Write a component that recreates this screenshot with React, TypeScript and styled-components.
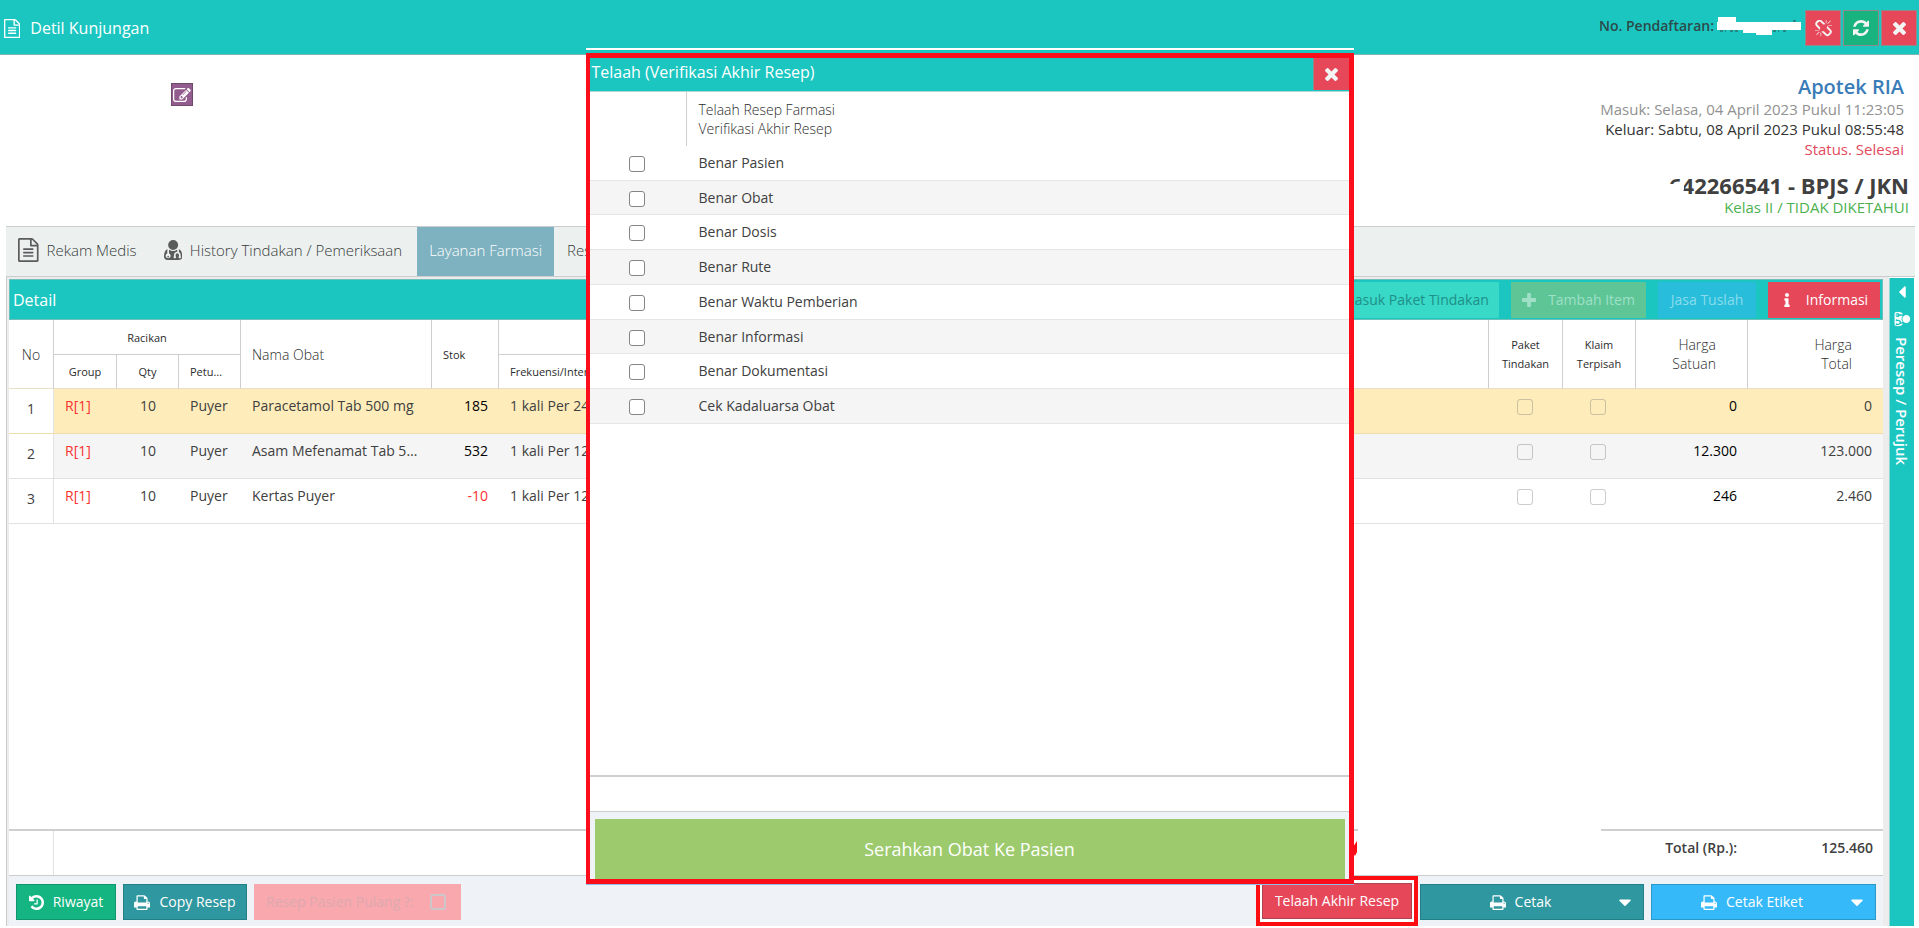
import React from "react";
import styled, { createGlobalStyle, css } from "styled-components";
import { FaInfo, FaCaretDown, FaCaretLeft } from "react-icons/fa";

const TEAL = "#1bc6c1";
const LINE = "#cfcfcf";

const Global = createGlobalStyle`
  * { box-sizing: border-box; }
  html, body, #root { height: 100%; }
  body { margin: 0; background: #fff; color: #404040; font: 14px/20px "Open Sans", sans-serif; overflow: hidden; }
  button { font-family: inherit; cursor: pointer; }
  table { border-collapse: separate; border-spacing: 0; table-layout: fixed; width: 100%; }
  th { font-weight: 300; color: #2c2c2c; }
`;

/* Font Awesome 4 glyphs: viewBox and outline */
const glyphs = {
  file: ["0 0 1536 1792", "M1468 380q28 28 48 76t20 88v1152q0 40-28 68t-68 28H96q-40 0-68-28t-28-68V96q0-40 28-68T96 0h896q40 0 88 20t76 48zm-444-244v376h376q-10-29-22-41l-313-313q-12-12-41-22zm384 1528V640H992q-40 0-68-28t-28-68V128H128v1536h1280zM384 800q0-14 9-23t23-9h704q14 0 23 9t9 23v64q0 14-9 23t-23 9H416q-14 0-23-9t-9-23v-64zm736 224q14 0 23 9t9 23v64q0 14-9 23t-23 9H416q-14 0-23-9t-9-23v-64q0-14 9-23t23-9h704zm0 256q14 0 23 9t9 23v64q0 14-9 23t-23 9H416q-14 0-23-9t-9-23v-64q0-14 9-23t23-9h704z"],
  edit: ["0 128 1792 1408", "M888 1184l116-116-152-152-116 116v56h96v96h56zm440-720q-16-16-33 1L945 815q-17 17-1 33t33-1l350-350q17-17 1-33zm80 594v190q0 119-84.500 203.500T1120 1536H288q-119 0-203.500-84.500T0 1248V416q0-119 84.500-203.500T288 128h832q63 0 117 25 15 7 18 23 3 17-9 29l-49 49q-14 14-32 8-23-6-45-6H288q-66 0-113 47t-47 113v832q0 66 47 113t113 47h832q66 0 113-47t47-113v-126q0-13 9-22l64-64q15-15 35-7t20 29zm-96-738l288 288-672 672H640V992zm444 132l-92 92-288-288 92-92q28-28 68-28t68 28l152 152q28 28 28 68t-28 68z"],
  refresh: ["0 128 1536 1536", "M1511 1056q0 5-1 7-64 268-268 434.500T764 1664q-146 0-282.500-55T238 1452l-129 129q-19 19-45 19t-45-19-19-45v-448q0-26 19-45t45-19h448q26 0 45 19t19 45-19 45l-137 137q71 66 161 102t187 36q134 0 250-65t186-179q11-17 53-117 8-23 30-23h192q13 0 22.500 9.500t9.500 22.500zm25-800v448q0 26-19 45t-45 19h-448q-26 0-45-19t-19-45 19-45l138-138Q969 384 768 384q-134 0-250 65T332 628q-11 17-53 117-8 23-30 23H50q-13 0-22.500-9.500T18 736v-7q65-268 270-434.500T768 128q146 0 284 55.500T1297 340l130-129q19-19 45-19t45 19 19 45z"],
  unlink: ["64 64 1664 1664", "M503 1271l-256 256q-10 9-23 9-12 0-23-9-9-10-9-23t9-23l256-256q10-9 23-9t23 9q9 10 9 23t-9 23zm169 41v320q0 14-9 23t-23 9-23-9-9-23v-320q0-14 9-23t23-9 23 9 9 23zm-224-224q0 14-9 23t-23 9h-320q-14 0-23-9t-9-23 9-23 23-9h320q14 0 23 9t9 23zm1264 128q0 120-85 203l-147 146q-83 83-203 83-121 0-204-85l-334-335q-21-21-42-56l239-18 273 274q28 28 68 28.500t68-27.500l147-146q28-28 28-67 0-40-28-68l-274-275 18-239q35 21 56 42l336 336q84 86 84 204zm-617-724l-239 18-273-274q-28-28-68-28-39 0-68 27l-147 146q-28 28-28 67 0 40 28 68l274 274-18 240q-35-21-56-42l-336-336q-84-86-84-204 0-120 85-203l147-146q83-83 203-83 121 0 204 85l334 335q21 21 42 56zm633 84q0 14-9 23t-23 9h-320q-14 0-23-9t-9-23 9-23 23-9h320q14 0 23 9t9 23zm-544-544v320q0 14-9 23t-23 9-23-9-9-23v-320q0-14 9-23t23-9 23 9 9 23zm407 151l-256 256q-11 9-23 9t-23-9q-9-10-9-23t9-23l256-256q10-9 23-9t23 9q9 10 9 23t-9 23z"],
  times: ["302 366 1188 1188", "M1490 1322q0 40-28 68l-136 136q-28 28-68 28t-68-28l-294-294-294 294q-28 28-68 28t-68-28l-136-136q-28-28-28-68t28-68l294-294-294-294q-28-28-28-68t28-68l136-136q28-28 68-28t68 28l294 294 294-294q28-28 68-28t68 28l136 136q28 28 28 68t-28 68l-294 294 294 294q28 28 28 68z"],
  plus: ["192 128 1408 1408", "M1600 736v192q0 40-28 68t-68 28h-416v416q0 40-28 68t-68 28h-192q-40 0-68-28t-28-68v-416h-416q-40 0-68-28t-28-68v-192q0-40 28-68t68-28h416v-416q0-40 28-68t68-28h192q40 0 68 28t28 68v416h416q40 0 68 28t28 68z"],
  print: ["64 0 1664 1664", "M448 1536h896v-256h-896v256zm0-640h896v-384h-160q-40 0-68-28t-28-68v-160h-640v640zm1152 64q0-26-19-45t-45-19-45 19-19 45 19 45 45 19 45-19 19-45zm128 0v416q0 13-9.500 22.500t-22.500 9.500h-224v160q0 40-28 68t-68 28h-960q-40 0-68-28t-28-68v-160h-224q-13 0-22.500-9.500t-9.500-22.500v-416q0-79 56.500-135.500t135.500-56.500h64v-544q0-40 28-68t68-28h672q40 0 88 20t76 48l152 152q28 28 48 76t20 88v256h64q79 0 135.500 56.500t56.500 135.500z"],
  history: ["128 128 1536 1536", "M1664 896q0 156-61 298t-164 245-245 164-298 61q-172 0-327-72.500t-264-204.500q-7-10-6.500-22.500t8.500-20.500l137-138q10-9 25-9 16 2 23 12 73 95 179 147t225 52q104 0 198.500-40.500t163.500-109.500 109.500-163.500 40.500-198.500-40.500-198.500-109.500-163.500-163.500-109.500-198.500-40.500q-98 0-188 35.500t-160 101.500l137 138q31 30 14 69-17 40-59 40h-448q-26 0-45-19t-19-45v-448q0-42 40-59 39-17 69 14l130 129q107-101 244.500-156.500t284.500-55.500q156 0 298 61t245 164 164 245 61 298zm-640-288v448q0 14-9 23t-23 9h-320q-14 0-23-9t-9-23v-64q0-14 9-23t23-9h224v-352q0-14 9-23t23-9h64q14 0 23 9t9 23z"],
  doctor: ["0 128 1408 1540", "M384 1408q0 26-19 45t-45 19-45-19-19-45 19-45 45-19 45 19 19 45zm1024 0q0 121-73 190t-194 69H267q-121 0-194-69T0 1408q0-68 5.500-131t24-138T77 1006.500t81-103T278 843q-22 52-22 120v203q-58 20-93 70t-35 111q0 80 56 136t136 56 136-56 56-136q0-61-35.500-111t-92.500-70V963q0-62 25-93 132 104 295 104t295-104q25 31 25 93v64q-106 0-181 75t-75 181v89q-32 29-32 71 0 40 28 68t68 28 68-28 28-68q0-42-32-71v-89q0-52 38-90t90-38 90 38 38 90v89q-32 29-32 71 0 40 28 68t68 28 68-28 28-68q0-42-32-71v-89q0-68-34.500-127.500T1152 1064q0-10 .5-42.500t0-48-2.500-41.500-7-47-13-40q68 15 120 60.500t81 103 47.500 132.500 24 138 5.500 131zM1088 512q0 159-112.500 271.500T704 896 432.500 783.500 320 512t112.500-271.500T704 128t271.500 112.500T1088 512z"],
};
const GlyphSvg = styled.svg<{ $s: number }>`
  height: ${(p) => p.$s}px;
  width: auto;
  fill: currentColor;
  flex: none;
  display: block;
`;
const Glyph = ({ name, s }: { name: keyof typeof glyphs; s: number }) => (
  <GlyphSvg $s={s} viewBox={glyphs[name][0]} aria-hidden="true">
    <path d={glyphs[name][1]} />
  </GlyphSvg>
);

const Page = styled.div`
  height: 100%;
  display: flex;
  flex-direction: column;
  padding-bottom: 2px;
  position: relative;
`;
const TopBar = styled.header`
  flex: none;
  height: 55px;
  background: ${TEAL};
  border-bottom: 1px solid #7fb5b3;
  display: flex;
  align-items: flex-start;
  padding: 10px 2px 0 4px;
  color: #fff;
`;
const Title = styled.h1`
  flex: 1;
  margin: 0;
  padding-top: 8px;
  display: flex;
  align-items: center;
  gap: 10px;
  font-size: 16px;
  line-height: 20px;
  font-weight: 400;
`;
const RegNo = styled.div`
  display: flex;
  align-items: center;
  gap: 3px;
  height: 32px;
  margin-right: 2px;
  font-size: 14px;
  font-weight: 600;
  color: #2b4a4a;
`;
const SquareButton = styled.button<{ $bg: string }>`
  width: 36px;
  height: 36px;
  padding: 0;
  margin-left: 2px;
  border: 1px solid #8f8a8c;
  background: ${(p) => p.$bg};
  color: #f4f4f4;
  display: flex;
  align-items: center;
  justify-content: center;
`;
const Summary = styled.section`
  flex: none;
  height: 171px;
  display: flex;
  justify-content: space-between;
  padding: 18px 10px 0 171px;
`;
const EditButton = styled.button`
  width: 22px;
  height: 23px;
  margin-top: 10px;
  padding: 0;
  border: 1px solid #6f4a6b;
  background: #935c8e;
  color: #fff;
  display: flex;
  align-items: center;
  justify-content: center;
`;
const Visit = styled.div`
  display: flex;
  flex-direction: column;
  align-items: flex-end;
`;
const VisitLine = styled.div<{ $c: string }>`
  color: ${(p) => p.$c};
  font-size: 15px;
  line-height: 20px;
  padding-right: 5px;
`;
const Clinic = styled.h2`
  margin: 0;
  padding: 2px 5px 0 0;
  font-size: 20px;
  line-height: 24px;
  font-weight: 600;
  color: #3a7cb8;
`;
const Insurance = styled.div`
  position: relative;
  margin-top: 14px;
  font-size: 22px;
  line-height: 24px;
  font-weight: 700;
`;
const Smudge = styled.svg`
  position: absolute;
  left: -8px;
  top: 0;
`;
const ClassLine = styled(VisitLine)`
  padding-right: 0;
`;
const Tabs = styled.nav`
  flex: none;
  height: 51px;
  margin: 0 4px 0 6px;
  border-top: 1px solid #c9cdcd;
  border-bottom: 1px solid #c9cdcd;
  background: #ecf1f0;
  display: flex;
  gap: 1px;
`;
const Tab = styled.button<{ $active?: boolean }>`
  border: 0;
  padding: 0 ${(p) => (p.$active ? 12 : 14)}px 4px 12px;
  display: flex;
  align-items: center;
  gap: 8px;
  white-space: nowrap;
  font-size: 15px;
  font-weight: 300;
  line-height: 20px;
  background: ${(p) => (p.$active ? "#7eb2c0" : "transparent")};
  color: ${(p) => (p.$active ? "#fff" : "#383a3a")};
  svg { color: #5a5c5c; }
`;
const Work = styled.main`
  flex: 1;
  min-height: 0;
  margin: 0 5px 0 6px;
  display: flex;
`;
const Panel = styled.section`
  flex: 1;
  min-width: 0;
  display: flex;
  flex-direction: column;
  padding: 2px 6px 0 2px;
  border-left: 1px solid #c9cdcd;
  background: #ececec;
`;
const Side = styled.aside`
  width: 25px;
  margin-top: 1px;
  border-left: 1px solid #8fd8d5;
  background: ${TEAL};
  color: #fff;
  display: flex;
  flex-direction: column;
  align-items: center;
  gap: 9px;
  padding-top: 4px;
`;
const SideLabel = styled.div`
  writing-mode: vertical-rl;
  display: flex;
  align-items: center;
  gap: 10px;
  font-size: 15px;
  line-height: 24px;
  font-weight: 600;
  svg { transform: rotate(90deg); }
`;
const DetailBar = styled.div`
  flex: none;
  height: 41px;
  border: 1px solid #6fbfba;
  background: ${TEAL};
  display: flex;
  align-items: center;
  justify-content: flex-end;
  gap: 12px;
  padding: 0 2px 0 3px;
`;
const DetailTitle = styled.h2`
  flex: 1;
  margin: 0;
  color: #fff;
  font-size: 16px;
  line-height: 20px;
  font-weight: 400;
`;
const BarButton = styled.button<{ $bg: string; $c: string; $w: number }>`
  width: ${(p) => p.$w}px;
  height: 36px;
  border: 0;
  padding: 0;
  background: ${(p) => p.$bg};
  color: ${(p) => p.$c};
  font-size: 14px;
  line-height: 20px;
  display: flex;
  align-items: center;
  justify-content: center;
  gap: 12px;
  white-space: nowrap;
`;
const Grid = styled.div`
  flex: 1;
  min-height: 0;
  background: #fff;
`;
const Th = styled.th<{ $small?: boolean; $align?: string }>`
  height: 35px;
  padding: 0 ${(p) => (p.$align === "left" ? 15 : 11)}px 0 11px;
  border-right: 1px solid ${LINE};
  border-bottom: 1px solid ${LINE};
  font-size: ${(p) => (p.$small ? 11 : 14)}px;
  font-weight: ${(p) => (p.$small ? 400 : 300)};
  line-height: 19px;
  text-align: ${(p) => p.$align || "center"};
  white-space: nowrap;
  overflow: hidden;
  text-overflow: ellipsis;
  &:last-child { border-right: 0; }
`;
const TallTh = styled(Th)`
  height: 34px;
  border-bottom-color: #e8dfc6;
`;
const LastSubTh = styled(TallTh)`
  &:last-child { border-right: 1px solid ${LINE}; }
`;
const HargaTh = styled(TallTh)`
  padding-right: 31px;
`;
const Row = styled.tr<{ $bg: string; $line: string }>`
  td { background: ${(p) => p.$bg}; border-bottom: 1px solid ${(p) => p.$line}; }
  td:first-child { background: #fff; border-right: 1px solid #e2e2e2; text-align: center; padding: 0 0 4px; }
`;
const Td = styled.td<{ $c?: string; $align?: string; $strong?: boolean }>`
  height: 45px;
  padding: 0 11px 10px;
  font-size: 14px;
  line-height: 20px;
  color: ${(p) => p.$c || "inherit"};
  text-align: ${(p) => p.$align || "left"};
  font-weight: ${(p) => (p.$strong ? 500 : 400)};
  white-space: nowrap;
  overflow: hidden;
  text-overflow: ellipsis;
`;
const CheckTd = styled(Td)`
  padding-right: 14px;
  text-align: center;
`;
const Check = styled.input<{ $dim?: boolean }>`
  appearance: none;
  display: inline-block;
  flex: none;
  vertical-align: middle;
  width: 16px;
  height: 16px;
  margin: 0;
  border: 1px solid ${(p) => (p.$dim ? "rgba(110,110,110,.35)" : "#858585")};
  border-radius: 3px;
  background: ${(p) => (p.$dim ? "transparent" : "#fff")};
`;
const FadedCheck = styled(Check)`
  border: 2px solid #cdc6ca;
`;
const TotalRow = styled.div`
  flex: none;
  height: 47px;
  background: #fff;
  border-top: 2px solid ${LINE};
  border-bottom: 1px solid #c9cdcd;
  display: flex;
  justify-content: flex-end;
  padding: 7px 10px 0 0;
  font-weight: 600;
  line-height: 20px;
  position: relative;
`;
const TotalNo = styled.div`
  width: 45px;
  margin: -7px auto 0 0;
  border-right: 1px solid #e2e2e2;
`;
const TotalValue = styled.output`
  width: 136px;
  text-align: right;
`;
const Redaction = styled.div`
  position: absolute;
  right: 282px;
  top: -4px;
  width: 243px;
  height: 40px;
  background: #fff;
`;
const Marker = styled.svg`
  position: absolute;
  right: 526px;
  top: 10px;
`;
const Footer = styled.footer`
  flex: none;
  height: 50px;
  padding: 8px 7px 0 7px;
  background: #eff3f8;
  display: flex;
  gap: 7px;
`;
const ActionButton = styled.button<{ $bg: string; $w: number }>`
  width: ${(p) => p.$w}px;
  height: 36px;
  padding: 0;
  border: 1px solid rgba(0, 60, 60, 0.25);
  background: ${(p) => p.$bg};
  color: #fff;
  font-size: 14px;
  line-height: 20px;
  display: flex;
  align-items: center;
  justify-content: center;
  gap: 9px;
  white-space: nowrap;
`;
const MenuLabel = styled.span`
  flex: 1;
  padding-left: 14px;
  display: flex;
  align-items: center;
  justify-content: center;
  gap: 9px;
`;
const MenuArrow = styled.span`
  padding-right: 8px;
  display: flex;
`;
const TakeHome = styled.label`
  width: 207px;
  height: 36px;
  background: #f9a8ae;
  color: #dca9ae;
  white-space: nowrap;
  display: flex;
  align-items: center;
  justify-content: space-between;
  padding: 0 15px 0 12px;
`;
const Spacer = styled.div`
  flex: 1;
`;
const Highlight = styled.div`
  width: 162px;
  height: 50px;
  margin: -8px -5px 0 0;
  border: 4px solid #fb0d12;
  background: #fff;
  display: flex;
  justify-content: center;
  align-items: center;
`;
const Dialog = styled.section`
  position: absolute;
  z-index: 2;
  left: 50%;
  top: 48px;
  bottom: 43px;
  width: 768px;
  margin-left: -374px;
  border-top: 2px solid #fff;
  border-bottom: 1px solid #8dbde8;
  padding-top: 3px;
  background: ${TEAL};
  display: flex;
`;
const Frame = styled.div`
  flex: 1;
  border: 5px solid #fb0d1b;
  border-width: 5px 5px 5px 4px;
  background: #fff;
  display: flex;
  flex-direction: column;
`;
const DialogHead = styled.header`
  flex: none;
  height: 34px;
  background: ${TEAL};
  color: #fff;
  display: flex;
  justify-content: space-between;
  border-bottom: 1px solid #a9d8d5;
`;
const DialogTitle = styled.h2`
  margin: 0;
  padding: 3px 0 0 2px;
  font-size: 16px;
  line-height: 22px;
  font-weight: 400;
`;
const CloseButton = styled(SquareButton)`
  height: 32px;
  border-width: 0 0 0 1px;
`;
const CheckTh = styled.th<{ $w?: number }>`
  width: ${(p) => (p.$w ? p.$w + "px" : "auto")};
  height: 54px;
  padding: 0 12px;
  text-align: left;
  font-size: 14px;
  line-height: 19px;
  ${(p) => p.$w && css`border-right: 1px solid ${LINE};`}
`;
const CheckRow = styled.tr`
  height: 35px;
  &:nth-child(4n + 2) { height: 34px; }
  &:nth-child(even) { background: #f5f5f5; }
  td { padding: 0 12px; line-height: 20px; border-bottom: 1px solid #e6e6e6; }
  td:first-child { padding: 0 3px 0 0; text-align: center; }
`;
const Fill = styled.div`
  flex: 1;
`;
const Strip = styled.div`
  flex: none;
  height: 37px;
  border-top: 2px solid ${LINE};
  border-bottom: 1px solid #c9cdcd;
`;
const DialogFoot = styled.footer`
  flex: none;
  padding: 7px 4px 0 5px;
  background: #eff3f8;
  display: flex;
`;
const HandOver = styled.button`
  flex: 1;
  height: 60px;
  border: 0;
  background: #9cca6c;
  color: #fff;
  font-size: 18px;
  line-height: 24px;
`;

const items = [
  { group: "R[1]", qty: 10, note: "Puyer", name: "Paracetamol Tab 500 mg", stock: "185", freq: "1 kali Per 24 Jam", price: "0", total: "0", bg: "#feedbb", line: "#eedcab" },
  { group: "R[1]", qty: 10, note: "Puyer", name: "Asam Mefenamat Tab 500 mg", stock: "532", freq: "1 kali Per 12 Jam", price: "12.300", total: "123.000", bg: "#f5f5f5", line: "#e2e2e2" },
  { group: "R[1]", qty: 10, note: "Puyer", name: "Kertas Puyer", stock: "-10", freq: "1 kali Per 12 Jam", price: "246", total: "2.460", bg: "#fff", line: "#e2e2e2" },
];
const checks = ["Benar Pasien", "Benar Obat", "Benar Dosis", "Benar Rute", "Benar Waktu Pemberian", "Benar Informasi", "Benar Dokumentasi", "Cek Kadaluarsa Obat"];
const columns = [45, 63, 62, 62, 191, 67, 190, 190, 0, 74, 73, 112, 135];

export default function App() {
  return (
    <Page>
      <Global />
      <TopBar>
        <Title><Glyph name="file" s={19} />Detil Kunjungan</Title>
        <RegNo>
          No. Pendaftaran:
          <svg width="84" height="20" viewBox="0 0 84 20">
            <path d="M3 15h6M13 15h9M56 15h6M66 15h5M76 5h5" stroke="#2b4a4a" strokeWidth="1" strokeDasharray="3 2" />
            <path d="M0 6h1V1h18v5h65v8H55v5H39v-2H26v-3H0z" fill="#fff" />
          </svg>
        </RegNo>
        <SquareButton $bg="#e64759" aria-label="Putuskan"><Glyph name="unlink" s={17} /></SquareButton>
        <SquareButton $bg="#18b37e" aria-label="Muat ulang"><Glyph name="refresh" s={16} /></SquareButton>
        <SquareButton $bg="#e64759" aria-label="Tutup"><Glyph name="times" s={13} /></SquareButton>
      </TopBar>

      <Summary>
        <EditButton aria-label="Ubah"><Glyph name="edit" s={14} /></EditButton>
        <Visit>
          <Clinic>Apotek RIA</Clinic>
          <VisitLine $c="#919191">Masuk: Selasa, 04 April 2023 Pukul 11:23:05</VisitLine>
          <VisitLine $c="#333">Keluar: Sabtu, 08 April 2023 Pukul 08:55:48</VisitLine>
          <VisitLine $c="#e24a5c">Status. Selesai</VisitLine>
          <Insurance>
            642266541 - BPJS / JKN
            <Smudge width="26" height="24" viewBox="0 0 26 24"><path d="M0 11h20l3-3v8l-2 8H0z" fill="#fff" /></Smudge>
          </Insurance>
          <ClassLine $c="#4db14f">Kelas II / TIDAK DIKETAHUI</ClassLine>
        </Visit>
      </Summary>

      <Tabs>
        <Tab><Glyph name="file" s={24} />Rekam Medis</Tab>
        <Tab><Glyph name="doctor" s={20} />History Tindakan / Pemeriksaan</Tab>
        <Tab $active>Layanan Farmasi</Tab>
        <Tab>Resep</Tab>
      </Tabs>

      <Work>
        <Panel>
          <DetailBar>
            <DetailTitle>Detail</DetailTitle>
            <BarButton $bg="#38d9c6" $c="#1f8f88" $w={167}>Masuk Paket Tindakan</BarButton>
            <BarButton $bg="#5dc596" $c="#9fe0c6" $w={135}><Glyph name="plus" s={14} />Tambah Item</BarButton>
            <BarButton $bg="#28bddb" $c="#8adcec" $w={98}>Jasa Tuslah</BarButton>
            <BarButton $bg="#e64759" $c="#fff" $w={112}><FaInfo size={14} />Informasi</BarButton>
          </DetailBar>
          <Grid>
            <table>
              <colgroup>
                {columns.map((w, i) => <col key={i} width={w || undefined} />)}
              </colgroup>
              <thead>
                <tr>
                  <TallTh rowSpan={2}>No</TallTh>
                  <Th colSpan={3} $small>Racikan</Th>
                  <TallTh rowSpan={2} $align="left">Nama Obat</TallTh>
                  <TallTh rowSpan={2} $small $align="left">Stok</TallTh>
                  <Th colSpan={2} $small />
                  <TallTh rowSpan={2} />
                  <TallTh rowSpan={2} $small>Paket<br />Tindakan</TallTh>
                  <TallTh rowSpan={2} $small>Klaim<br />Terpisah</TallTh>
                  <HargaTh rowSpan={2} $align="right">Harga<br />Satuan</HargaTh>
                  <HargaTh rowSpan={2} $align="right">Harga<br />Total</HargaTh>
                </tr>
                <tr>
                  <TallTh $small>Group</TallTh>
                  <TallTh $small>Qty</TallTh>
                  <TallTh $small $align="left">Petunjuk</TallTh>
                  <TallTh $small $align="left">Frekuensi/Interval</TallTh>
                  <LastSubTh $small />
                </tr>
              </thead>
              <tbody>
                {items.map((r, i) => (
                  <Row key={i} $bg={r.bg} $line={r.line}>
                    <Td>{i + 1}</Td>
                    <Td $c="#f8322f">{r.group}</Td>
                    <Td $align="center">{r.qty}</Td>
                    <Td>{r.note}</Td>
                    <Td>{r.name}</Td>
                    <Td $align="right" $strong={i < 2} $c={i < 2 ? "#000" : "#f8322f"}>{r.stock}</Td>
                    <Td>{r.freq}</Td>
                    <Td />
                    <Td />
                    <CheckTd><Check type="checkbox" $dim aria-label="Paket Tindakan" /></CheckTd>
                    <CheckTd><Check type="checkbox" $dim aria-label="Klaim Terpisah" /></CheckTd>
                    <Td $align="right" $strong $c="#000">{r.price}</Td>
                    <Td $align="right">{r.total}</Td>
                  </Row>
                ))}
              </tbody>
            </table>
          </Grid>
          <TotalRow>
            <TotalNo />
            <Redaction />
            <Marker width="4" height="15" viewBox="0 0 4 15"><path d="M4 0v11L2 15 0 12V6z" fill="#fb0d12" /></Marker>
            Total (Rp.): <TotalValue>125.460</TotalValue>
          </TotalRow>
          <Footer>
            <ActionButton $bg="#14b581" $w={100}><Glyph name="history" s={15} />Riwayat</ActionButton>
            <ActionButton $bg="#2f979f" $w={124}><Glyph name="print" s={16} />Copy Resep</ActionButton>
            <TakeHome>Resep Pasien Pulang ?: <FadedCheck type="checkbox" $dim /></TakeHome>
            <Spacer />
            <Highlight><ActionButton $bg="#e64759" $w={150}>Telaah Akhir Resep</ActionButton></Highlight>
            <ActionButton $bg="#2f979f" $w={224}>
              <MenuLabel><Glyph name="print" s={16} />Cetak</MenuLabel><MenuArrow><FaCaretDown size={20} /></MenuArrow>
            </ActionButton>
            <ActionButton $bg="#36b9f9" $w={225}>
              <MenuLabel><Glyph name="print" s={16} />Cetak Etiket</MenuLabel><MenuArrow><FaCaretDown size={20} /></MenuArrow>
            </ActionButton>
          </Footer>
        </Panel>
        <Side>
          <FaCaretLeft size={20} />
          <SideLabel><Glyph name="doctor" s={16} />Peresep / Perujuk</SideLabel>
        </Side>
      </Work>

      <Dialog role="dialog" aria-label="Telaah (Verifikasi Akhir Resep)">
        <Frame>
          <DialogHead>
            <DialogTitle>Telaah (Verifikasi Akhir Resep)</DialogTitle>
            <CloseButton $bg="#e64759" aria-label="Tutup"><Glyph name="times" s={13} /></CloseButton>
          </DialogHead>
          <table>
            <thead>
              <tr>
                <CheckTh $w={97} />
                <CheckTh>Telaah Resep Farmasi<br />Verifikasi Akhir Resep</CheckTh>
              </tr>
            </thead>
            <tbody>
              {checks.map((c, i) => (
                <CheckRow key={c}>
                  <td><Check type="checkbox" id={"c" + i} /></td>
                  <td><label htmlFor={"c" + i}>{c}</label></td>
                </CheckRow>
              ))}
            </tbody>
          </table>
          <Fill />
          <Strip />
          <DialogFoot><HandOver>Serahkan Obat Ke Pasien</HandOver></DialogFoot>
        </Frame>
      </Dialog>
    </Page>
  );
}
